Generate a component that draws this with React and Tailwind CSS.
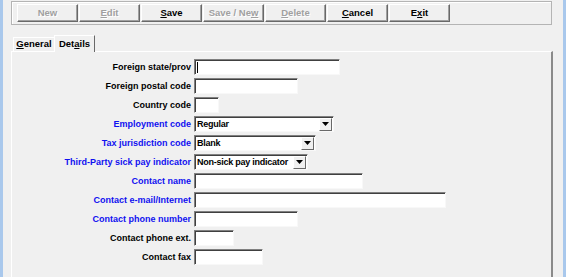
import React from "react";

const rows = [
  { label: "Foreign state/prov", w: 146, blue: false, caret: true },
  { label: "Foreign postal code", w: 104, blue: false },
  { label: "Country code", w: 25, blue: false },
  { label: "Employment code", w: 140, blue: true, select: "Regular" },
  { label: "Tax jurisdiction code", w: 122, blue: true, select: "Blank" },
  { label: "Third-Party sick pay indicator", w: 114, blue: true, select: "Non-sick pay indicator" },
  { label: "Contact name", w: 169, blue: true },
  { label: "Contact e-mail/Internet", w: 252, blue: true },
  { label: "Contact phone number", w: 104, blue: true },
  { label: "Contact phone ext.", w: 40, blue: false },
  { label: "Contact fax", w: 69, blue: false },
];

function ToolButton({ children, disabled }) {
  return (
    <div
      className={`w-[61px] h-[18px] flex items-center justify-center border border-t-white border-l-white border-b-[#696969] border-r-[#696969] shadow-[inset_-1px_-1px_0_#a0a0a0] text-[9.5px] font-bold whitespace-nowrap ${
        disabled ? "text-[#a0a0a0] [text-shadow:1px_1px_0_#fff]" : "text-black"
      }`}
    >
      {children}
    </div>
  );
}

function Field({ row }) {
  const sunken =
    "h-[16px] bg-white border border-t-[#808080] border-l-[#808080] border-b-[#f8f8f8] border-r-[#f8f8f8] shadow-[inset_1px_1px_0_#404040]";
  if (row.select) {
    return (
      <div className={`${sunken} flex items-center`} style={{ width: row.w }}>
        <span className="flex-1 pl-[2px] text-[9px] tracking-[-0.25px] font-bold text-black leading-none whitespace-nowrap">
          {row.select}
        </span>
        <div className="w-[13px] h-[13px] mr-[1px] shrink-0 bg-[#f0f0f0] border border-t-white border-l-white border-b-[#696969] border-r-[#696969] flex items-center justify-center">
          <svg width="7" height="4" viewBox="0 0 7 4">
            <path d="M0 0h7L3.5 4z" fill="#000" />
          </svg>
        </div>
      </div>
    );
  }
  return (
    <div className={`${sunken} flex items-center`} style={{ width: row.w }}>
      {row.caret && <div className="ml-[2px] w-[1px] h-[11px] bg-black" />}
    </div>
  );
}

export default function App() {
  return (
    <div className="w-[566px] h-[277px] overflow-hidden bg-[#f0f0f0] flex font-['Liberation_Sans',Arial,sans-serif]">
      <div className="w-[3px] bg-[#a9c8ec]" />
      <div className="flex-1 flex flex-col pl-[8px] pr-[10px]">
        {/* Toolbar */}
        <div className="mt-[1px] h-[24px] w-[541px] border border-[#b4b4b4] shadow-[inset_1px_1px_0_#fff] flex items-center pl-[5px] gap-[1px]">
          <ToolButton disabled>New</ToolButton>
          <ToolButton disabled>
            <span className="underline">E</span>dit
          </ToolButton>
          <ToolButton>
            <span className="underline">S</span>ave
          </ToolButton>
          <ToolButton disabled>
            Save / Ne<span className="underline">w</span>
          </ToolButton>
          <ToolButton disabled>
            <span className="underline">D</span>elete
          </ToolButton>
          <ToolButton>
            <span className="underline">C</span>ancel
          </ToolButton>
          <ToolButton>
            E<span className="underline">x</span>it
          </ToolButton>
        </div>

        {/* Tabs */}
        <div className="mt-[9px] flex items-end h-[17px] pl-[2px] relative z-10">
          <div className="h-[14px] w-[41px] flex items-center justify-center border-t border-l border-white text-[9.5px] font-bold text-black">
            <span className="underline">G</span>eneral
          </div>
          <div className="h-[17px] w-[41px] flex items-center justify-center border-t border-l border-white border-r border-r-[#696969] bg-[#f0f0f0] text-[9.5px] font-bold text-black -mb-[1px]">
            Det<span className="underline">a</span>ils
          </div>
        </div>
        <div className="w-[542px] flex-1 border-t border-l border-white border-r-2 border-r-[#8a8a8a] pt-[7px]">
          <div className="flex flex-col gap-[3px]">
            {rows.map((row) => (
              <div key={row.label} className="flex items-center h-[16px]">
                <div
                  className={`w-[182px] text-right pr-[3px] text-[9px] font-bold leading-none whitespace-nowrap ${
                    row.blue ? "text-[#1010f0]" : "text-black"
                  }`}
                >
                  {row.label}
                </div>
                <Field row={row} />
              </div>
            ))}
          </div>
        </div>
      </div>
      <div className="w-[3px] bg-[#a9c8ec]" />
    </div>
  );
}
